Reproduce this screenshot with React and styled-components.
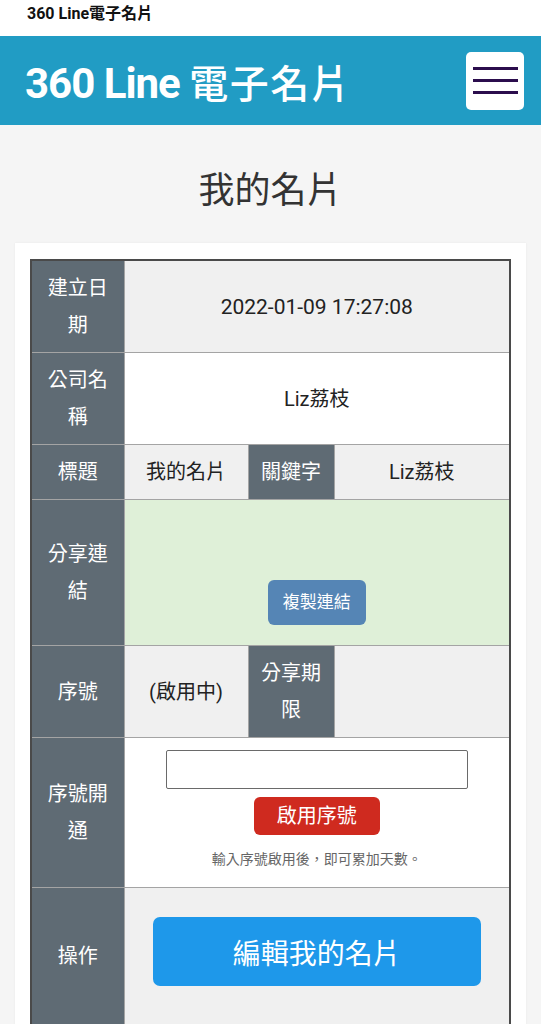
import React from "react";
import styled, { createGlobalStyle } from "styled-components";

const Global = createGlobalStyle`
  html, body { margin: 0; padding: 0; background: #f5f5f5; }
  body { font-family: Roboto, "Noto Sans CJK TC", "Noto Sans", sans-serif; color: #222; }
  * { box-sizing: border-box; }
`;

const TopStrip = styled.div`
  height: 36px;
  background: #ffffff;
  padding-left: 27px;
  display: flex;
  align-items: center;
  padding-bottom: 13px;
  font-size: 16px;
  font-weight: 700;
  color: #111;
`;

const Header = styled.header`
  height: 89px;
  background: #219cc4;
  display: flex;
  align-items: center;
  justify-content: space-between;
  padding: 0 17px 0 25px;
`;

const Brand = styled.div`
  color: #ffffff;
  line-height: 1;
  padding-top: 6px;
  display: flex;
  align-items: baseline;
  white-space: pre;
`;

const BrandLatin = styled.span`
  font-size: 42px;
  font-weight: 700;
  letter-spacing: -1px;
`;

const BrandCjk = styled.span`
  font-size: 39px;
  font-weight: 500;
  letter-spacing: 1.5px;
`;

const MenuButton = styled.button`
  width: 58px;
  height: 58px;
  background: #ffffff;
  border: none;
  border-radius: 5px;
  display: flex;
  flex-direction: column;
  align-items: center;
  justify-content: center;
  gap: 9px;
  padding: 0;
`;

const MenuLine = styled.span`
  display: block;
  width: 45px;
  height: 3px;
  background: #2b0d4d;
`;

const PageTitle = styled.h1`
  margin: 46px 0 32px;
  text-align: center;
  font-size: 36px;
  font-weight: 400;
  line-height: 40px;
  color: #333;
`;

const Card = styled.div`
  margin: 0 15px;
  background: #ffffff;
  padding: 16px 15px 16px 15px;
  box-shadow: 0 0 2px rgba(0, 0, 0, 0.06);
`;

const Table = styled.table`
  width: 100%;
  border-collapse: collapse;
  border: 2px solid #4a4a4a;
  table-layout: fixed;
`;

const Row = styled.tr`
  background: ${(p) => p.$bg || "#f0f0f0"};
`;

const Label = styled.th`
  background: #5f6b74;
  color: #ffffff;
  font-weight: 400;
  font-size: 20px;
  line-height: 37px;
  padding: 9px 10px 8px;
  border: 1px solid #a4a4a4;
  text-align: center;
  vertical-align: middle;
  word-break: break-all;
`;

const Cell = styled.td`
  font-size: 20px;
  line-height: 37px;
  padding: 9px 8px 8px;
  border: 1px solid #a4a4a4;
  text-align: center;
  vertical-align: middle;
  color: #222;
`;

const Num = styled.span`
  font-size: 21px;
`;

const ActionCell = styled(Cell)`
  padding: ${(p) => p.$pad || "9px 10px"};
`;

const LinkArea = styled.div`
  display: flex;
  flex-direction: column;
  align-items: center;
  gap: 10px;
`;

const LinkText = styled.div`
  min-height: 61px;
`;

const SmallButton = styled.button`
  font-family: inherit;
  font-size: ${(p) => p.$fs};
  line-height: 1;
  color: #ffffff;
  background: ${(p) => p.$bg};
  border: none;
  border-radius: 6px;
  height: ${(p) => p.$h};
  padding: 0 ${(p) => p.$px};
`;

const SerialArea = styled.div`
  display: flex;
  flex-direction: column;
  align-items: center;
`;

const SerialInput = styled.input`
  width: 302px;
  height: 39px;
  border: 1px solid #6a6a6a;
  border-radius: 2px;
  background: #fff;
  margin-bottom: 8px;
`;

const Hint = styled.div`
  font-size: 14px;
  line-height: 18px;
  color: #666;
  margin-top: 15px;
`;

const BigButton = styled.button`
  width: 100%;
  height: 69px;
  background: #1e98ea;
  color: #ffffff;
  font-family: inherit;
  font-size: 28px;
  border: none;
  border-radius: 7px;
  margin-bottom: 9px;
`;

export default function App() {
  return (
    <>
      <Global />
      <TopStrip>360 Line電子名片</TopStrip>
      <Header>
        <Brand>
          <BrandLatin>360 Line </BrandLatin>
          <BrandCjk>電子名片</BrandCjk>
        </Brand>
        <MenuButton aria-label="menu">
          <MenuLine />
          <MenuLine />
          <MenuLine />
        </MenuButton>
      </Header>
      <PageTitle>我的名片</PageTitle>
      <Card>
        <Table>
          <colgroup>
            <col style={{ width: "93px" }} />
            <col style={{ width: "124px" }} />
            <col style={{ width: "86px" }} />
            <col />
          </colgroup>
          <tbody>
            <Row>
              <Label>建立日期</Label>
              <Cell colSpan={3}>
                <Num>2022-01-09 17:27:08</Num>
              </Cell>
            </Row>
            <Row $bg="#ffffff">
              <Label>公司名稱</Label>
              <Cell colSpan={3}>Liz荔枝</Cell>
            </Row>
            <Row>
              <Label>標題</Label>
              <Cell>我的名片</Cell>
              <Label>關鍵字</Label>
              <Cell>Liz荔枝</Cell>
            </Row>
            <Row $bg="#dff0d8">
              <Label>分享連結</Label>
              <ActionCell colSpan={3} $pad="9px 10px 20px">
                <LinkArea>
                  <LinkText />
                  <SmallButton $bg="#5585b5" $h="45px" $px="15px" $fs="17px">
                    複製連結
                  </SmallButton>
                </LinkArea>
              </ActionCell>
            </Row>
            <Row>
              <Label>序號</Label>
              <Cell>(啟用中)</Cell>
              <Label>分享期限</Label>
              <Cell></Cell>
            </Row>
            <Row $bg="#ffffff">
              <Label>序號開通</Label>
              <ActionCell colSpan={3} $pad="12px 10px 19px">
                <SerialArea>
                  <SerialInput type="text" />
                  <SmallButton $bg="#cf2a1f" $h="38px" $px="23px" $fs="20px">
                    啟用序號
                  </SmallButton>
                  <Hint>輸入序號啟用後，即可累加天數。</Hint>
                </SerialArea>
              </ActionCell>
            </Row>
            <Row>
              <Label>操作</Label>
              <ActionCell colSpan={3} $pad="29px 28px 29px">
                <BigButton>編輯我的名片</BigButton>
              </ActionCell>
            </Row>
          </tbody>
        </Table>
      </Card>
    </>
  );
}
